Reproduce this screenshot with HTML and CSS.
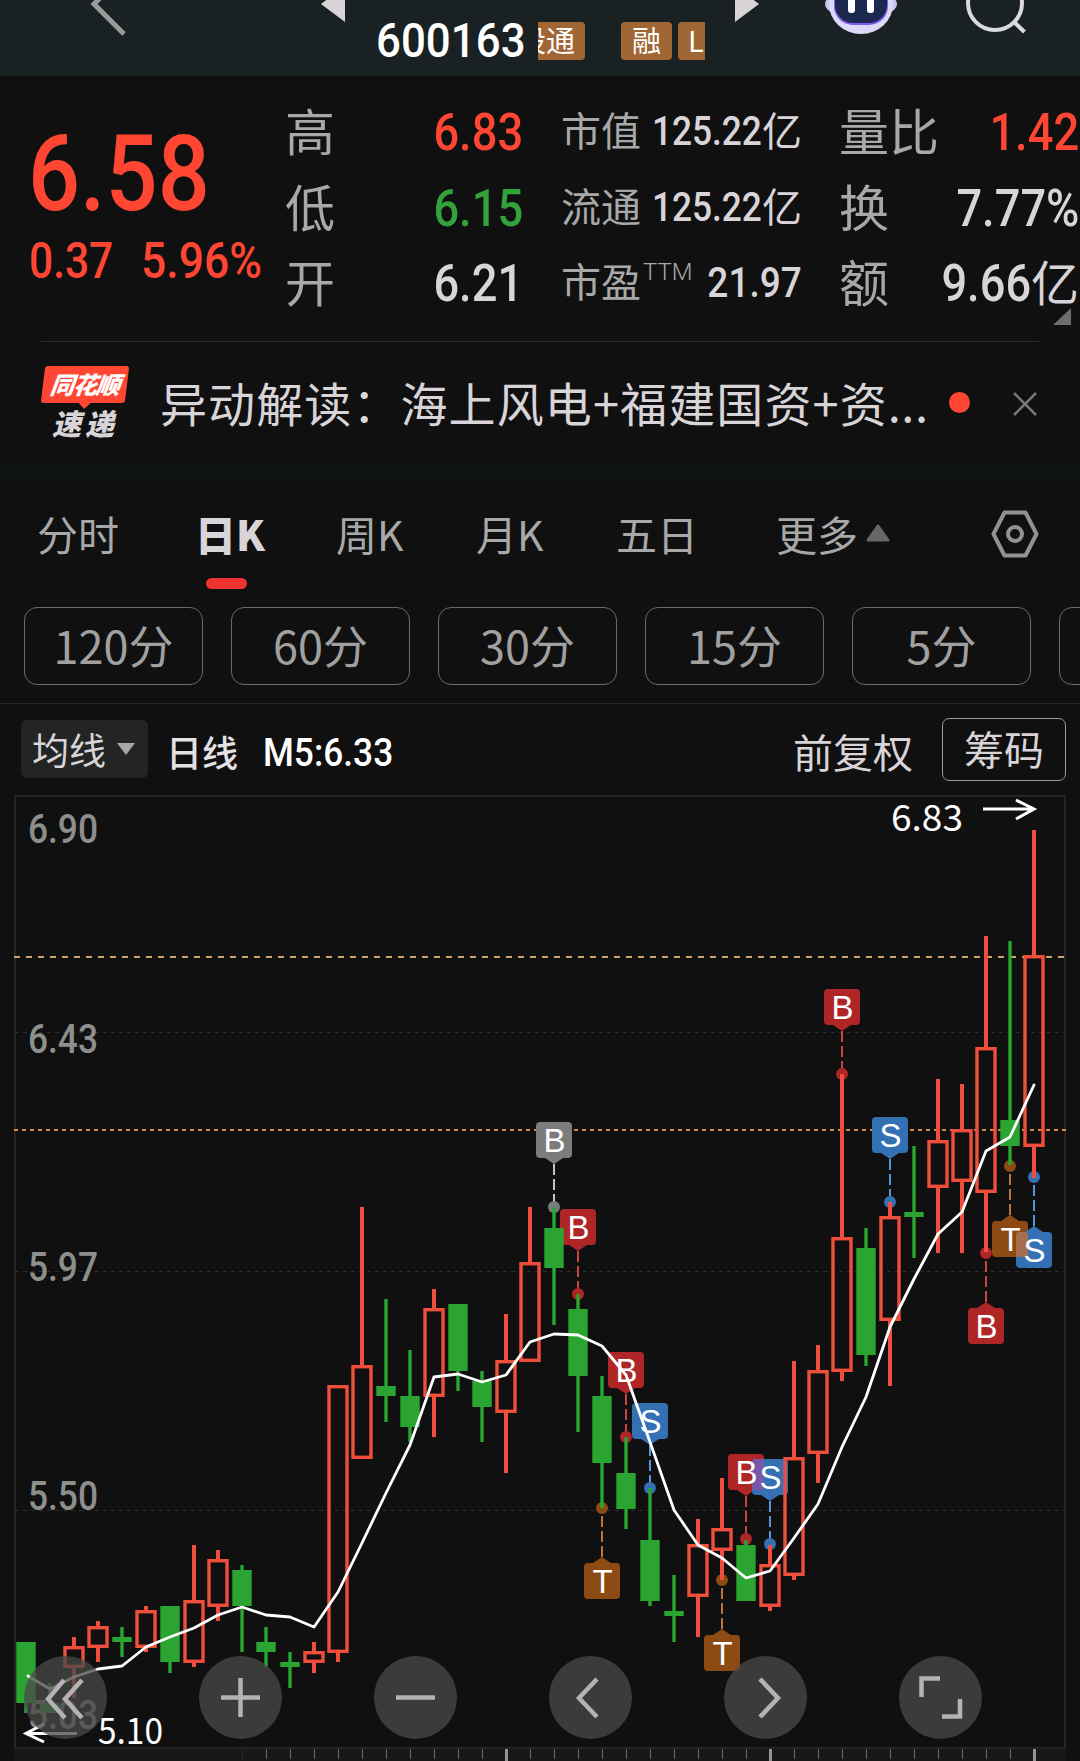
FILE: index.html
```html
<!DOCTYPE html>
<html lang="zh-CN">
<head>
	<meta charset="UTF-8">
	<title>600163 日K</title>
	<link rel="stylesheet" href="styles.css">
</head>
<body>
	<div id="main">
		<header class="topbar">
			<svg class="topbar-icons" width="1080" height="76" viewBox="0 0 1080 76">
				<path d="M124 34L94 4L108 -10" fill="none" stroke="#999" stroke-width="5"/>
				<path d="M321 4L345 -14V22Z" fill="#d8d4d8"/>
				<path d="M759 4L735 -14V22Z" fill="#d8d4d8"/>
				<ellipse cx="861" cy="4" rx="36" ry="15" fill="#c9c5ee"/>
				<ellipse cx="861" cy="4" rx="32" ry="30" fill="#dcd8f8"/>
				<rect x="834" y="-24" width="54" height="49" rx="19" fill="#7a5cf0"/>
				<rect x="835" y="-26" width="52" height="49" rx="18" fill="#1c2850"/>
				<rect x="848" y="-4" width="7" height="17" rx="3" fill="#fff"/>
				<rect x="867" y="-4" width="7" height="17" rx="3" fill="#fff"/>
				<circle cx="995" cy="3" r="27" fill="none" stroke="#dcdadc" stroke-width="4"/>
				<path d="M1013 21L1024.500 32" stroke="#dcdadc" stroke-width="4"/>
			</svg>
			<div class="stock">
				<span class="num code">600163</span>
				<div class="tags"><span class="tag tag-hgt">股通</span><span class="tag">融</span><span class="tag">L</span></div>
			</div>
		</header>

		<section class="quote">
			<div class="price red">
				<div class="num last">6.58</div>
				<div class="change"><span class="num">0.37</span><span class="num percent">5.96%</span></div>
			</div>
			<ul class="stats">
				<li><span>高</span><b class="num red">6.83</b></li>
				<li><span>低</span><b class="num green">6.15</b></li>
				<li><span>开</span><b class="num">6.21</b></li>
			</ul>
			<ul class="stats small">
				<li><span>市值</span><b><i class="num">125.22</i>亿</b></li>
				<li><span>流通</span><b><i class="num">125.22</i>亿</b></li>
				<li><span>市盈<sup>TTM</sup></span><b><i class="num pe">21.97</i></b></li>
			</ul>
			<ul class="stats">
				<li><span>量比</span><b class="num red">1.42</b></li>
				<li><span>换</span><b class="num">7.77%</b></li>
				<li><span>额</span><b><i class="num">9.66</i>亿</b></li>
			</ul>
			<span class="corner"></span>
		</section>

		<section class="news">
			<div class="logo">
				<span class="logo-top">同花顺</span>
				<span class="logo-bottom">速递</span>
			</div>
			<p>异动解读：海上风电+福建国资+资<span class="dots">...</span></p>
			<span class="unread"></span>
			<svg width="26" height="26" viewBox="0 0 26 26"><path d="M2 2L24 24M24 2L2 24" stroke="#777" stroke-width="2.500"/></svg>
		</section>

		<nav class="tabs">
			<a class="t1">分时</a>
			<a class="t2 active">日K</a>
			<a class="t3">周K</a>
			<a class="t4">月K</a>
			<a class="t5">五日</a>
			<a class="t6">更多<svg width="24" height="18" viewBox="0 0 24 18"><path d="M12 2L22 16H2Z" fill="#666865" stroke="#666865" stroke-width="3" stroke-linejoin="round"/></svg></a>
			<svg class="setting" width="50" height="50" viewBox="0 0 50 50" fill="none" stroke="#929292" stroke-width="4" stroke-linejoin="round"><path d="M14.500 3.500H35.500L46.500 25L35.500 46.500H14.500L3.500 25Z"/><circle cx="25" cy="25" r="7"/></svg>
		</nav>

		<div class="minutes">
			<a>120分</a><a>60分</a><a>30分</a><a>15分</a><a>5分</a><a></a>
		</div>

		<div class="toolbar">
			<span class="ma">均线<i class="arrow-down"></i></span>
			<span class="line-name">日线</span>
			<span class="num m5">M5:6.33</span>
			<span class="fq">前复权</span>
			<span class="chip">筹码</span>
		</div>

		<div class="chart">
			<svg id="kline" width="1080" height="969" viewBox="0 792 1080 969"></svg>
			<div class="controls">
				<a><svg viewBox="0 0 83 83"><path d="M40 24L24 43L41 62M58 24L41 43L58 62"/></svg></a>
				<a><svg viewBox="0 0 83 83"><path d="M41.500 22V61M22 41.500H61"/></svg></a>
				<a><svg viewBox="0 0 83 83"><path d="M22 41.500H61"/></svg></a>
				<a><svg viewBox="0 0 83 83"><path d="M48 23L30 42L48 61"/></svg></a>
				<a><svg viewBox="0 0 83 83"><path d="M36 23L54 42L36 61"/></svg></a>
				<a><svg viewBox="0 0 83 83"><path d="M22.500 41V22.500H41M61 43V60.500H43"/></svg></a>
			</div>
		</div>
	</div>
	<script src="kline.js"></script>
</body>
</html>
```
FILE: styles.css
```css
*{ margin: 0; padding: 0; box-sizing: border-box;}
body{ background-color: #101010; color: #d8d4d8; font-family: "Liberation Sans", "Noto Sans CJK SC", sans-serif;}
ul{ list-style: none;}
i{ font-style: normal;}
b{ font-weight: 400;}
svg{ display: block; flex: none;}
#main{ width: 1080px; height: 1761px; overflow: hidden; font-family: "Noto Sans CJK SC", sans-serif;}
.num{ display: inline-block; font-family: Roboto, "Noto Sans CJK SC", sans-serif; font-weight: 500; transform: scaleX(.87); transform-origin: 100% 50%; white-space: nowrap;}
.red{ color: #ff4633;}
.green{ color: #33a23a;}

/* 顶栏 */
.topbar{ position: relative; height: 76px; background-color: #1a2122;}
.topbar-icons{ position: absolute; left: 0; top: 0;}
.stock{ display: flex; align-items: center; padding: 5px 0 0 376px; height: 76px;}
.code{ width: 162px; color: #fff; font-size: 49px; transform: scaleX(.895); transform-origin: 0 50%;}
.tags{ display: flex; justify-content: flex-end; width: 167px; height: 38px; overflow: hidden;}
.tag{ flex: none; width: 51px; margin-right: 6px; border-radius: 4px; background-color: #a06634; color: #fff; font-size: 29px; line-height: 35px; text-align: center;}
.tag-hgt{ width: 80px; margin-right: 36px; text-align: right; padding-right: 10px;}
.tag:last-child{ margin-right: -24px; padding-left: 10px; text-align: left;}

/* 报价 */
.quote{ position: relative; display: flex; height: 265px; padding: 18px 0 0 32px;}
.price{ width: 253px;}
.last{ margin: 19px 0 0 -4px; font-size: 106px; font-weight: 500; line-height: 122px; transform: scaleX(.865); transform-origin: 0 50%;}
.change{ display: flex; font-size: 50px; line-height: 50px; margin-top: -10px; margin-left: -3px; padding-top: 11px;}
.change .num{ width: 112px; transform: scaleX(.85); transform-origin: 0 50%;}
.change .percent{ transform: scaleX(.89);}
.stats{ width: 238px; margin-right: 38px; color: #a8a8a8; font-size: 50px;}
.stats li{ display: flex; justify-content: space-between; height: 75.5px; line-height: 76px; white-space: nowrap;}
.stats span{ margin-top: -3px;}
.stats b{ color: #d8d4d8; font-size: 52px; padding-top: 1px;}
.stats b.red{ color: #ff4633;}
.stats b.green{ color: #33a23a;}
.stats b:not(.num){ display: flex; padding: 0; margin-top: -3px; font-size: 48px; font-weight: 400;}
.stats b i{ font-size: 52px; margin-top: 4px;}
.small{ width: 241px; margin-right: 37px; font-size: 40px;}
.small b:not(.num){ font-size: 40px;}
.small b i{ font-size: 41px; transform: scaleX(.86); margin: 2px 0 0 -20px;}
.small b .pe{ font-size: 43px;}
.small span{ display: flex; margin-top: -3px;}
.small sup{ font-family: Roboto, sans-serif; font-size: 24px; font-weight: 300; line-height: 61px; margin-left: 2px;}
.stats:nth-of-type(3){ width: 240px; margin-right: 0;}
.corner{ position: absolute; left: 1053px; top: 232px; border-left: 18px solid transparent; border-bottom: 17px solid #6c6e6c;}

/* 快讯 */
.news{ display: flex; align-items: center; height: 124px; margin: 0 41px; border-top: 1px solid #2b2b2b;}
.logo{ display: flex; flex-direction: column; width: 88px; margin-right: 31px; font-weight: 900; font-style: italic; text-align: center;}
.logo-top{ position: relative; width: 84px; height: 37px; margin-left: 2px; border-radius: 3px; background-color: #ff4633; color: #fff; font-size: 24px; line-height: 36px; letter-spacing: -1px; transform: skewX(-7deg);}
.logo-top:after{ content: ""; position: absolute; left: 38px; top: 37px; border: 6px solid transparent; border-top-color: #ff4633;}
.logo-bottom{ height: 38px; font-size: 29px; line-height: 38px; letter-spacing: 4px;}
.news p{ width: 772px; margin-top: -4px; font-size: 47px; letter-spacing: 1.1px; white-space: nowrap;}
.dots{ letter-spacing: .5px;}
.unread{ width: 21px; height: 21px; margin: -2px 42px 0 17px; border-radius: 50%; background-color: #ff4633;}

/* 周期 */
.tabs{ display: flex; align-items: center; height: 142px; padding-left: 37px; border-top: 14px solid #0e1511; color: #a8a8a8; font-size: 41px; line-height: 60px;}
.tabs a{ display: flex; align-items: center; flex: none; height: 108px; margin-top: -21px;}
.t1{ width: 158px;}
.t2{ width: 141px; position: relative;}
.t3{ width: 140px;}
.t4{ width: 140px;}
.t5{ width: 160px;}
.t6{ width: 214px;}
.t6 svg{ margin: 0 0 0 8px;}
.tabs .active{ color: #d8d4d8; font-weight: 900;}
.active:after{ content: ""; position: absolute; left: 11px; bottom: -2px; width: 41px; height: 11px; border-radius: 6px; background-color: #ee3333;}
.setting{ margin-top: -18px;}
.minutes{ display: flex; gap: 28px; height: 97px; padding-left: 24px; border-bottom: 1px solid #262626; overflow: hidden;}
.minutes a{ flex: none; width: 179px; height: 78px; border: 1px solid #6a6a6a; border-radius: 13px; color: #a0a0a0; font-size: 45px; line-height: 74px; text-align: center;}

/* 图表工具条 */
.toolbar{ display: flex; align-items: center; height: 88px; padding: 2px 14px 0 21px; font-size: 40px;}
.ma{ display: flex; align-items: center; width: 127px; height: 58px; padding-left: 11px; border-radius: 6px; background-color: #222524; font-size: 37px; line-height: 52px;}
.arrow-down{ margin-left: 11px; border: 9px solid transparent; border-top: 12px solid #a8a5a8; border-bottom: 0;}
.line-name{ margin: 3px 0 0 18px; font-size: 36px; font-weight: 500; color: #e4e0e4;}
.m5{ width: 160px; margin: 7px 0 0 25px; color: #fff; font-size: 39px; transform: scaleX(.905); transform-origin: 0 50%;}
.fq{ margin: 3px 29px 0 auto;}
.chip{ width: 124px; height: 63px; border: 1px solid #999; border-radius: 7px; line-height: 58px; text-align: center;}

/* K线 */
.chart{ position: relative; height: 969px;}
.controls{ position: absolute; left: 24px; top: 864px; display: flex; gap: 92px;}
.controls a{ width: 83px; height: 83px; border-radius: 50%; background-color: rgba(73, 74, 72, .76);}
.controls path{ fill: none; stroke: #b4b2b4; stroke-width: 4.5;}
.frame{ fill: none; stroke: #242424; stroke-width: 2;}
.grid{ stroke: #2c2c2c; stroke-width: 1; stroke-dasharray: 4 4;}
.axis{ font: 500 41px Roboto, sans-serif; fill: #8c8f8c;}
.extreme{ font: 36px "Noto Sans CJK SC", sans-serif; fill: #fff;}
.mark{ font: 33px "Liberation Sans", sans-serif; fill: #fff; text-anchor: middle;}
```
FILE: kline.js
```js
var svg = document.getElementById("kline");
var RED = "#f04e3c", GREEN = "#2ba532";
var html = "";

// 方向(1涨 0跌), 最高, 实体上沿, 实体下沿, 最低
var candles = [
	[0, 1642, 1642, 1703, 1713], [0, 1683, 1703, 1713, 1713], [1, 1637, 1646, 1668, 1698],
	[1, 1621, 1626, 1648, 1662], [0, 1627, 1637, 1642, 1657], [1, 1606, 1610, 1648, 1652],
	[0, 1606, 1606, 1662, 1673], [1, 1545, 1600, 1663, 1667], [1, 1550, 1559, 1607, 1621],
	[0, 1565, 1570, 1606, 1652], [0, 1627, 1642, 1652, 1667], [0, 1652, 1662, 1667, 1688],
	[1, 1642, 1651, 1663, 1673], [1, 1385, 1385, 1653, 1662], [1, 1207, 1365, 1459, 1459],
	[0, 1299, 1386, 1396, 1422], [0, 1350, 1396, 1427, 1442], [1, 1289, 1308, 1397, 1437],
	[0, 1304, 1304, 1371, 1391], [0, 1371, 1381, 1407, 1442], [1, 1314, 1360, 1413, 1473],
	[1, 1207, 1262, 1362, 1362], [0, 1207, 1228, 1268, 1325], [0, 1294, 1309, 1376, 1432],
	[0, 1376, 1396, 1463, 1508], [0, 1437, 1473, 1509, 1529], [0, 1488, 1540, 1601, 1606],
	[0, 1575, 1611, 1616, 1642], [1, 1519, 1544, 1597, 1637], [1, 1478, 1528, 1551, 1580],
	[0, 1540, 1545, 1601, 1601], [1, 1545, 1564, 1607, 1611], [1, 1361, 1457, 1576, 1580],
	[1, 1345, 1370, 1454, 1483], [1, 1074, 1237, 1372, 1381], [0, 1228, 1248, 1355, 1366],
	[1, 1202, 1216, 1321, 1386], [0, 1146, 1212, 1217, 1258], [1, 1079, 1140, 1188, 1253],
	[1, 1084, 1129, 1182, 1253], [1, 936, 1047, 1193, 1252], [0, 941, 1120, 1146, 1165],
	[1, 830, 955, 1147, 1178]
];

var ma5 = [1676, 1689, 1677, 1669, 1666, 1647, 1637, 1628, 1615, 1607, 1615, 1617, 1627, 1592, 1543,
	1493, 1445, 1377, 1374, 1382, 1375, 1342, 1334, 1335, 1346, 1375, 1442, 1510, 1545, 1558, 1578,
	1571, 1538, 1504, 1447, 1397, 1327, 1279, 1234, 1212, 1151, 1137, 1085];

// 序号, 字母, 圆点y, 位置(1上 0下), 底色, 线色
var marks = [
	[22, "B", 1207, 1, "#7c7c7c", "#c4c0c4"], [23, "B", 1294, 1, "#ae2626", "#c84444"],
	[24, "T", 1508, 0, "#8d4a12", "#b87440"], [25, "B", 1437, 1, "#ae2626", "#c84444"],
	[26, "S", 1488, 1, "#3470b4", "#5b92dc"], [29, "T", 1580, 0, "#8d4a12", "#b87440"],
	[30, "B", 1539, 1, "#ae2626", "#c84444"], [31, "S", 1544, 1, "#3470b4", "#5b92dc"],
	[34, "B", 1074, 1, "#ae2626", "#c84444"], [36, "S", 1202, 1, "#3470b4", "#5b92dc"],
	[40, "B", 1253, 0, "#ae2626", "#c84444"], [41, "T", 1166, 0, "#8d4a12", "#b87440"],
	[42, "S", 1177, 0, "#3470b4", "#5b92dc"]
];

function px(i) {
	return 26 + i * 24;
}
function line(x1, y1, x2, y2, attr) {
	html += '<line x1="' + x1 + '" y1="' + y1 + '" x2="' + x2 + '" y2="' + y2 + '" ' + attr + '/>';
}
function rect(x, y, w, h, attr) {
	html += '<rect x="' + x + '" y="' + y + '" width="' + w + '" height="' + h + '" ' + attr + '/>';
}
function markTop(m) {
	return m[3] ? m[2] - 85 : m[2] + 55;
}

// 外框和网格
rect(14, 1749, 1052, 12, 'fill="#181818"');
rect(15, 796, 1050, 952, 'class="frame"');
[1032.5, 1271.5, 1510.5].forEach(function (y) {
	line(15, y, 1065, y, 'class="grid"');
});
line(14, 957, 1065, 957, 'stroke="#c8a66e" stroke-width="2" stroke-dasharray="6 6"');
line(14, 1130, 1066, 1130, 'stroke="#d88844" stroke-width="2" stroke-dasharray="4 4"');

// 刻度
for (var t = 9; t < 43; t++) {
	var big = t === 20 || t === 31 || t === 42;
	var color = t === 9 ? "#2a2a2a" : big ? "#929292" : "#686868";
	line(px(t) + .5, 1749, px(t) + .5, big ? 1761 : 1759, 'stroke="' + color + '" stroke-width="' + (big ? 3 : 1) + '"');
}

[["6.90", 843], ["6.43", 1053], ["5.97", 1281], ["5.50", 1510], ["5.03", 1729]].forEach(function (a) {
	html += '<text class="axis" x="28" y="' + a[1] + '" textLength="70" lengthAdjust="spacingAndGlyphs">' + a[0] + '</text>';
});

// 买卖点
marks.forEach(function (m) {
	var x = px(m[0]), y = m[2], top = markTop(m);
	var edge = m[3] ? top + 36 : top, tip = m[3] ? edge + 6 : edge - 6;
	line(x, tip, x, y, 'stroke="' + m[5] + '" stroke-width="2" stroke-dasharray="11 4"');
	html += '<circle cx="' + x + '" cy="' + y + '" r="6" fill="' + m[4] + '"/>';
	html += '<path d="M' + (x - 9) + ' ' + edge + 'H' + (x + 9) + 'L' + x + ' ' + tip + 'Z" fill="' + m[4] + '"/>';
	rect(x - 18, top, 36, 36, 'rx="4" fill="' + m[4] + '"');
});
// 相邻标记的重叠部分
rect(752, 1459, 12, 31, 'rx="3" fill="#7759a8"');
rect(1016, 1232, 12, 25, 'rx="3" fill="#a86e50"');
marks.forEach(function (m) {
	html += '<text class="mark" x="' + (px(m[0]) + .5) + '" y="' + (markTop(m) + 30) + '">' + m[1] + '</text>';
});

// 蜡烛
candles.forEach(function (c, i) {
	var x = px(i), color = c[0] ? RED : GREEN, w = c[0] ? 4 : 3.4;
	if (c[2] > c[1]) line(x, c[1], x, c[2], 'stroke="' + color + '" stroke-width="' + w + '"');
	if (c[4] > c[3]) line(x, c[3], x, c[4], 'stroke="' + color + '" stroke-width="' + w + '"');
	if (c[0]) {
		rect(x - 9, c[2] + 1.7, 18, c[3] - c[2] - 3.4, 'fill="none" stroke="' + color + '" stroke-width="3.4"');
	} else {
		rect(x - 9.7, c[2], 19.4, c[3] - c[2], 'fill="' + color + '"');
	}
});

// 均线
html += '<polyline fill="none" stroke="#fff" stroke-width="2.8" stroke-linejoin="round" stroke-linecap="round" points="' + ma5.map(function (y, i) {
	return (i ? px(i) : 28) + "," + y;
}).join(" ") + '"/>';

// 最高最低
html += '<text class="extreme" x="891" y="831" textLength="72" lengthAdjust="spacingAndGlyphs">6.83</text>';
html += '<text class="extreme" x="98" y="1744" textLength="65" lengthAdjust="spacingAndGlyphs">5.10</text>';
html += '<path d="M983 809H1033M1016 800L1034 809L1016 819" fill="none" stroke="#fff" stroke-width="3"/>';
html += '<path d="M77 1733.5H27M44 1724L26 1733.5L44 1742" fill="none" stroke="#fff" stroke-width="3"/>';

svg.innerHTML = html;
```
